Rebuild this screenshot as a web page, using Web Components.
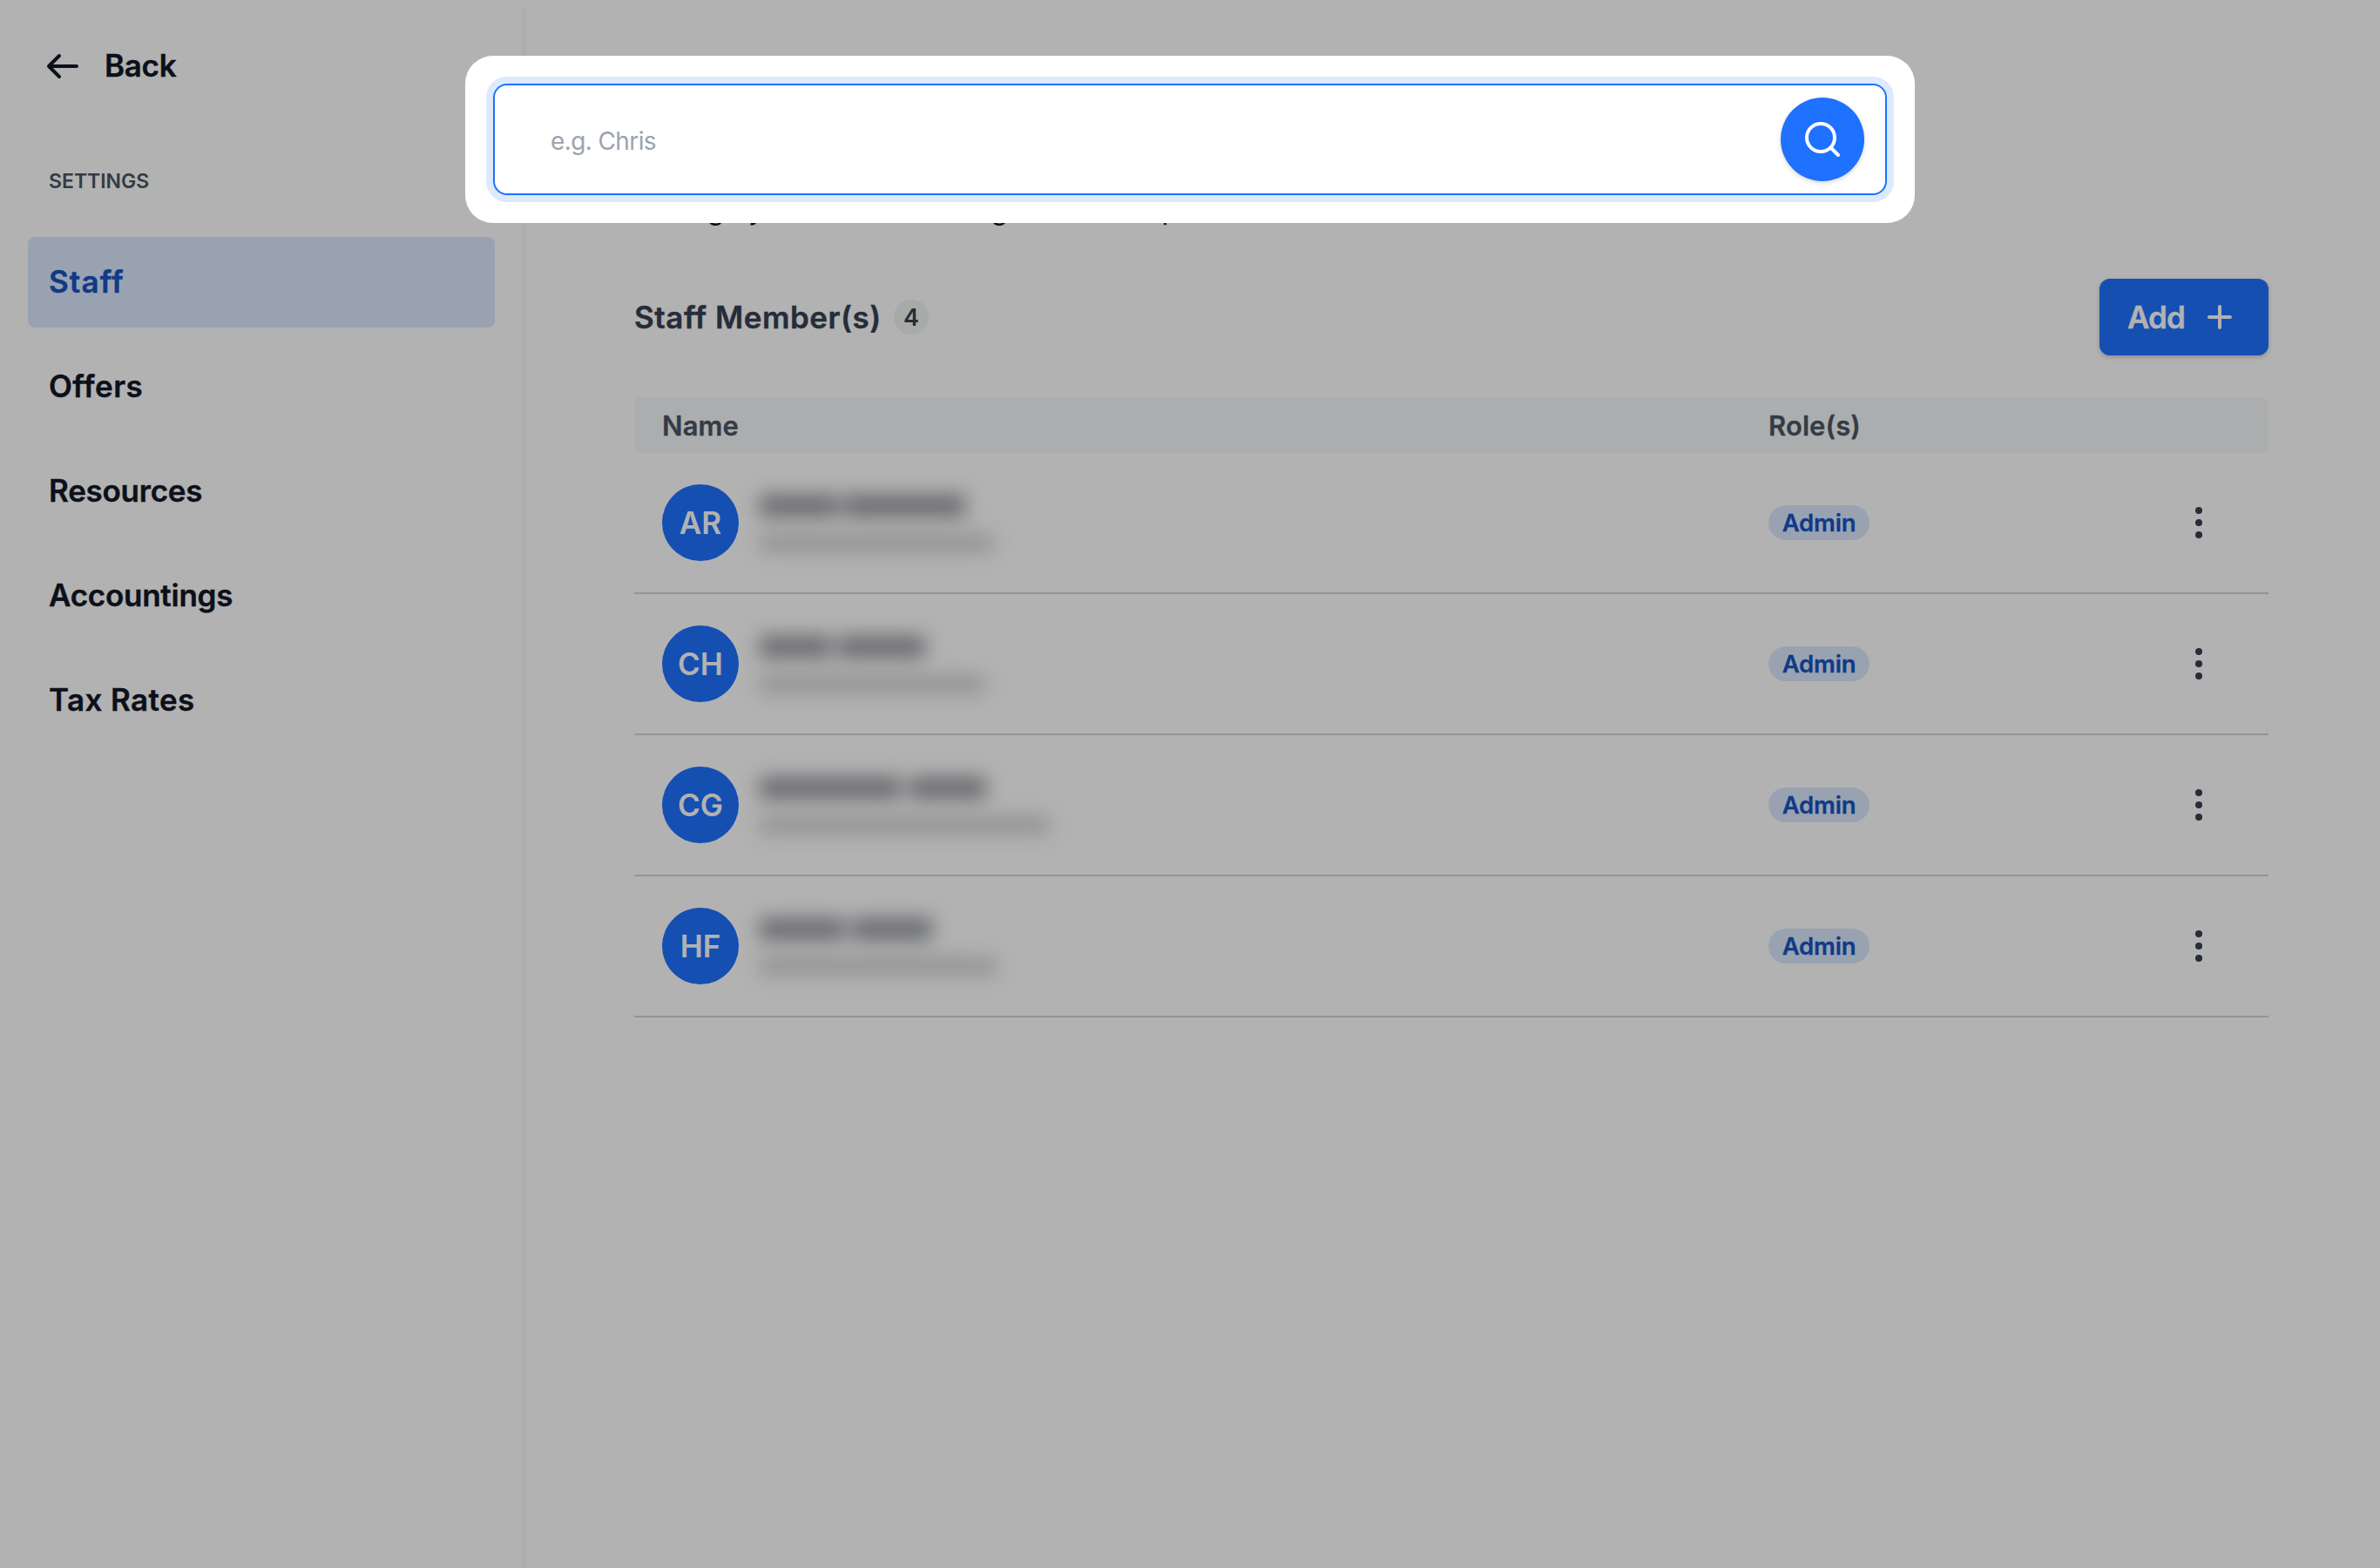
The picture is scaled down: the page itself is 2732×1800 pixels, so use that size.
<!DOCTYPE html>
<html lang="en">
<head>
<meta charset="utf-8">
<title>Staff</title>
<style>
    body {
        margin: 0;
        width: 2732px;
        height: 1800px;
        overflow: hidden;
        font-family: Inter, "Liberation Sans", sans-serif;
        background: #fff;
        color: #111827;
        --primary: #1f71ff;
        --primary-dark: #1854c2;
        --primary-light: #dce9fe;
    }
</style>
</head>
<body>
<staff-page></staff-page>

<script>
const define = (name, html, setup) => {
    const template = document.createElement("template");
    template.innerHTML = html;

    window.customElements.define(
        name,
        class extends HTMLElement {
            constructor() {
                super();
                this.attachShadow({ mode: "open" });
                this.shadowRoot.appendChild(template.content.cloneNode(true));
            }

            connectedCallback() {
                if (setup) setup(this, this.shadowRoot);
            }
        }
    );
};

define("back-link", `
    <style>
        :host {
            display: flex;
            align-items: center;
            gap: 24px;
            height: 48px;
            padding-left: 48px;
            font-size: 35px;
            font-weight: 600;
            letter-spacing: -0.3px;
            -webkit-text-stroke: 0.4px;
        }
        svg { display: block; }
        span { padding-bottom: 2px; }
    </style>
    <svg width="48" height="48" viewBox="0 0 48 48" fill="none" stroke="currentColor" stroke-width="4" stroke-linecap="round" stroke-linejoin="round">
        <path d="M40 24H8M20 12L8 24L20 36" />
    </svg>
    <span><slot></slot></span>
`);

define("nav-item", `
    <style>
        :host {
            display: flex;
            align-items: center;
            height: 104px;
            padding: 0 24px 2px;
            box-sizing: border-box;
            border-radius: 8px;
            font-size: 35px;
            font-weight: 600;
            letter-spacing: var(--track, 0.4px);
            -webkit-text-stroke: 0.4px;
        }
        :host([active]) {
            background: var(--primary-light);
            color: var(--primary-dark);
        }
    </style>
    <span><slot></slot></span>
`);

define("side-bar", `
    <style>
        :host {
            display: flex;
            flex-direction: column;
            flex: none;
            width: 600px;
            box-sizing: border-box;
            padding: 52px 32px 0;
            box-shadow: 2px 10px 6px rgba(17, 24, 39, 0.06);
        }
        back-link { margin-left: -32px; }
        h2 {
            margin: 93px 0 49px 24px;
            font-size: 23px;
            line-height: 30px;
            font-weight: 600;
            color: #4b5563;
        }
        nav {
            display: flex;
            flex-direction: column;
            gap: 16px;
        }
        .wide { --track: 1.1px; }
        .narrow { --track: -0.25px; }
    </style>
    <back-link>Back</back-link>
    <h2>SETTINGS</h2>
    <nav>
        <nav-item class="wide" active>Staff</nav-item>
        <nav-item>Offers</nav-item>
        <nav-item class="narrow">Resources</nav-item>
        <nav-item class="narrow">Accountings</nav-item>
        <nav-item>Tax Rates</nav-item>
    </nav>
`);

define("add-button", `
    <style>
        :host {
            display: flex;
            align-items: center;
            justify-content: space-between;
            width: 194px;
            height: 88px;
            padding: 0 32px;
            box-sizing: border-box;
            border-radius: 12px;
            background: var(--primary);
            color: #fff;
            font-size: 35px;
            font-weight: 600;
            letter-spacing: -0.9px;
            -webkit-text-stroke: 0.4px;
            box-shadow: 0 2px 6px rgba(0, 0, 0, 0.14), 0 2px 4px rgba(0, 0, 0, 0.08);
        }
        svg { display: block; }
    </style>
    <span><slot></slot></span>
    <svg width="48" height="48" viewBox="0 0 48 48" stroke="currentColor" stroke-width="4" stroke-linecap="round">
        <path d="M24 12V36M12 24H36" />
    </svg>
`);

define("section-header", `
    <style>
        :host {
            display: flex;
            align-items: center;
            height: 88px;
        }
        h1 {
            margin: 0 16px 0 0;
            padding-bottom: 1px;
            width: 282px;
            white-space: nowrap;
            font-size: 35px;
            font-weight: 600;
            letter-spacing: 0.5px;
            -webkit-text-stroke: 0.4px;
            color: #374151;
        }
        .count {
            display: grid;
            place-items: center;
            width: 40px;
            height: 40px;
            border-radius: 50%;
            background: #f1f3f3;
            color: #374151;
            font-size: 27px;
            font-weight: 600;
        }
        add-button { margin-left: auto; }
    </style>
    <h1><slot></slot></h1>
    <span class="count"></span>
    <add-button>Add</add-button>
`, (host, root) => {
    root.querySelector(".count").textContent = host.getAttribute("count");
});

define("role-pill", `
    <style>
        :host {
            display: inline-flex;
            align-items: center;
            justify-content: center;
            width: 116px;
            height: 40px;
            border-radius: 20px;
            background: var(--primary-light);
            color: var(--primary-dark);
            font-size: 27.5px;
            font-weight: 600;
            letter-spacing: -0.2px;
            -webkit-text-stroke: 0.3px;
        }
    </style>
    <span><slot></slot></span>
`);

// Private details: soft bars in place of the name and the email
define("hidden-details", `
    <style>
        :host {
            display: flex;
            flex-direction: column;
            gap: 20px;
            padding-top: 2px;
            filter: blur(11px);
        }
        .name {
            display: flex;
        }
        i {
            display: block;
            height: 25px;
            background: #96989e;
        }
        .email {
            height: 21px;
            background: #d2d2d2;
        }
    </style>
    <div class="name"></div>
    <div class="email"></div>
`, (host, root) => {
    const [first, gap, last] = host.getAttribute("name-size").split(" ");
    root.querySelector(".name").innerHTML =
        `<i style="width:${first}px"></i><i style="width:${last}px;margin-left:${gap}px"></i>`;
    root.querySelector(".email").style.width = host.getAttribute("email-size") + "px";
});

define("staff-row", `
    <style>
        :host {
            display: grid;
            grid-template-columns: 1270px 1fr 48px;
            align-items: center;
            height: 162px;
            padding: 0 56px 0 32px;
            box-sizing: border-box;
            border-bottom: 2px solid #d1d5db;
        }
        .person {
            display: flex;
            align-items: center;
            gap: 24px;
        }
        .avatar {
            display: grid;
            place-items: center;
            width: 88px;
            height: 88px;
            border-radius: 50%;
            background: var(--primary);
            color: #fff;
            font-size: 35px;
            font-weight: 600;
        }
        svg { display: block; }
    </style>
    <div class="person">
        <div class="avatar"></div>
        <slot></slot>
    </div>
    <div><role-pill>Admin</role-pill></div>
    <svg width="48" height="48" viewBox="0 0 48 48" fill="#374151">
        <circle cx="24" cy="10" r="4" />
        <circle cx="24" cy="24" r="4" />
        <circle cx="24" cy="38" r="4" />
    </svg>
`, (host, root) => {
    root.querySelector(".avatar").textContent = host.getAttribute("initials");
});

define("staff-table", `
    <style>
        :host { display: block; }
        .head {
            display: grid;
            grid-template-columns: 1270px 1fr;
            align-items: center;
            height: 64px;
            padding: 0 32px;
            border-radius: 8px;
            background: #f6f8fa;
            color: #4b5563;
            font-size: 31px;
            font-weight: 600;
            letter-spacing: 0.1px;
            -webkit-text-stroke: 0.3px;
        }
    </style>
    <div class="head"><span>Name</span><span>Role(s)</span></div>
    <slot></slot>
`);

define("search-box", `
    <style>
        :host {
            display: flex;
            align-items: center;
            justify-content: space-between;
            box-sizing: border-box;
            height: 128px;
            padding: 0 24px 0 64px;
            border: 2px solid var(--primary);
            border-radius: 16px;
            background: #fff;
            box-shadow: 0 0 0 8px #dde9fd;
        }
        .placeholder {
            padding-top: 4px;
            font-size: 28px;
            letter-spacing: -0.6px;
            color: #9ca3af;
        }
        .button {
            display: grid;
            place-items: center;
            width: 96px;
            height: 96px;
            border-radius: 50%;
            background: var(--primary);
            box-shadow: 0 2px 6px rgba(0, 0, 0, 0.1), 0 2px 4px rgba(0, 0, 0, 0.06);
        }
        svg { display: block; }
    </style>
    <span class="placeholder"></span>
    <div class="button">
        <svg width="48" height="48" viewBox="0 0 48 48" fill="none" stroke="#fff" stroke-width="4" stroke-linecap="round">
            <circle cx="22" cy="22" r="16" />
            <path d="M34 34L42 42" />
        </svg>
    </div>
`, (host, root) => {
    root.querySelector(".placeholder").textContent = host.getAttribute("placeholder");
});

// The white frame stays lit, its huge shadow dims the rest of the page
define("spot-light", `
    <style>
        :host {
            position: absolute;
            left: 534px;
            top: 64px;
            width: 1664px;
            height: 192px;
            box-sizing: border-box;
            padding: 32px;
            border-radius: 32px;
            background: #fff;
            box-shadow: 0 0 0 3000px rgba(0, 0, 0, 0.302);
        }
    </style>
    <slot></slot>
`);

define("staff-page", `
    <style>
        :host {
            display: flex;
            position: relative;
            height: 1800px;
            overflow: hidden;
        }
        main {
            flex: 1;
            padding: 221px 128px 0;
        }
        p {
            margin: 0;
            font-size: 32px;
            line-height: 40px;
            white-space: nowrap;
        }
        section-header { margin: 59px 0 48px; }
    </style>
    <side-bar></side-bar>
    <main>
        <p>Manage your staff and assign roles and permissions</p>
        <section-header count="4">Staff Member(s)</section-header>
        <staff-table>
            <staff-row initials="AR"><hidden-details name-size="90 6 140" email-size="268"></hidden-details></staff-row>
            <staff-row initials="CH"><hidden-details name-size="82 8 100" email-size="258"></hidden-details></staff-row>
            <staff-row initials="CG"><hidden-details name-size="162 10 88" email-size="332"></hidden-details></staff-row>
            <staff-row initials="HF"><hidden-details name-size="98 8 92" email-size="272"></hidden-details></staff-row>
        </staff-table>
    </main>
    <spot-light>
        <search-box placeholder="e.g. Chris"></search-box>
    </spot-light>
`);
</script>
</body>
</html>
